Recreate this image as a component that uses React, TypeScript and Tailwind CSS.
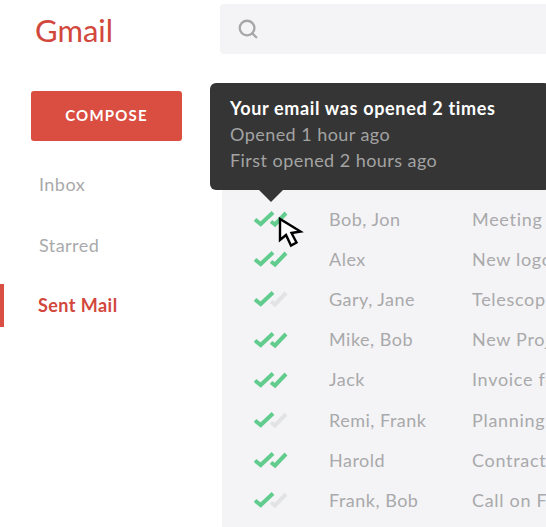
import { Search } from "lucide-react";

const rows = [
  { to: "Bob, Jon", subject: "Meeting with the team", both: true },
  { to: "Alex", subject: "New logo concepts", both: true },
  { to: "Gary, Jane", subject: "Telescope order", both: false },
  { to: "Mike, Bob", subject: "New Project kickoff", both: true },
  { to: "Jack", subject: "Invoice for March", both: true },
  { to: "Remi, Frank", subject: "Planning session", both: false },
  { to: "Harold", subject: "Contract review", both: true },
  { to: "Frank, Bob", subject: "Call on Friday", both: false },
];

function Ticks({ both }: { both: boolean }) {
  return (
    <svg className="shrink-0" width="35" height="18" viewBox="0 0 35 18" fill="none" strokeWidth="4">
      <path d="M18 11.5L22 14.5L33 3" stroke={both ? "#62cc8e" : "#e2e3e5"} />
      <path d="M2 9.5L7.7 14L20 2.5" stroke="#62cc8e" />
    </svg>
  );
}

function NavItem({ label, active }: { label: string; active?: boolean }) {
  return (
    <div
      className={`h-[43px] flex items-center border-l-4 text-[18px] tracking-[0.45px] ${
        active
          ? "pl-[34px] border-[#d94f43] text-[#d2473c] font-bold"
          : "pl-[35px] border-transparent text-[#a9a9ab]"
      }`}
    >
      {label}
    </div>
  );
}

export default function App() {
  return (
    <div className="relative w-[546px] h-[527px] overflow-hidden bg-white flex font-['Lato',sans-serif]">
      <aside className="w-[220px] shrink-0">
        <div className="pl-[35px] pt-[10px] h-[91px] text-[31px] leading-[40px] text-[#d2473c]">Gmail</div>
        <div className="pl-[31px]">
          <button className="w-[151px] h-[50px] pb-[2px] rounded-[3px] bg-[#da4d41] text-white text-[15px] font-bold tracking-[1.2px]">
            COMPOSE
          </button>
        </div>
        <nav className="mt-[22px] flex flex-col gap-[17.5px]">
          <NavItem label="Inbox" />
          <NavItem label="Starred" />
          <NavItem label="Sent Mail" active />
        </nav>
      </aside>

      <main className="flex-1 min-w-0">
        <div className="mt-1 h-[50px] rounded-l-[4px] bg-[#f4f4f6] flex items-center pl-[17px]">
          <Search size={22} strokeWidth={2.5} className="text-[#a6a6a8]" />
        </div>
        <div className="mt-[29px] ml-[2px] h-[444px] pt-[116px] bg-[#f4f4f6]">
          {rows.map((r) => (
            <div
              key={r.to}
              className="h-[40.2px] flex items-center text-[18px] tracking-[0.5px] text-[#a9a9ab] whitespace-nowrap"
            >
              <div className="w-[31px] shrink-0" />
              <Ticks both={r.both} />
              <div className="ml-[41px] w-[143px] shrink-0">{r.to}</div>
              <div className="tracking-[0.7px]">{r.subject}</div>
            </div>
          ))}
        </div>
      </main>

      {/* tooltip over the list */}
      <div className="absolute left-[210px] top-[83px] w-[340px] h-[107px] rounded-[6px] bg-[#353535] pl-[20px] pt-[12px] text-[18px] leading-[26px] tracking-[0.45px] text-[#a3a3a3]">
        <div className="font-bold text-white tracking-[0.65px]">Your email was opened 2 times</div>
        <div>Opened 1 hour ago</div>
        <div>First opened 2 hours ago</div>
        <div className="absolute left-[49px] top-[107px] w-0 h-0 border-x-[12px] border-x-transparent border-t-[12px] border-t-[#353535]" />
      </div>

      {/* mouse pointer */}
      <svg
        className="absolute left-[277px] top-[216px]"
        width="28"
        height="33"
        viewBox="0 0 28 33"
        fill="white"
        stroke="black"
        strokeWidth="2.4"
      >
        <path d="M3 3V24L9 19L14 29.5L19.5 26.5L14.5 17L23.5 15.5Z" />
      </svg>
    </div>
  );
}
